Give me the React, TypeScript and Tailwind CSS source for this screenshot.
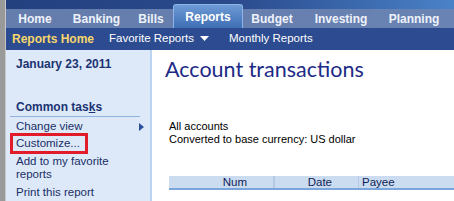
import React from 'react';

const tabs = [
  { label: 'Home', w: 'w-[58px]' },
  { label: 'Banking', w: 'w-[65px]' },
  { label: 'Bills', w: 'w-[44px]' },
  { label: 'Reports', w: 'w-[70px]', active: true },
  { label: 'Budget', w: 'w-[58px]' },
  { label: 'Investing', w: 'w-[80px]' },
  { label: 'Planning', w: 'w-[66px]' },
];

const App: React.FC = () => {
  return (
    <div className="w-[454px] h-[201px] overflow-hidden flex bg-white font-['Liberation_Sans',Arial,sans-serif]">
      {/* left window frame */}
      <div className="w-[6px] shrink-0 bg-[#9a9a9a] border-r border-[#c8c8c8]" />

      <div className="flex-1 flex flex-col min-w-0">
        {/* tab bar */}
        <div className="h-[28px] shrink-0 bg-gradient-to-r from-[#23407f] via-[#2a4a8c] to-[#4a82c8] flex flex-col justify-end">
          <div className="h-[19px] bg-[#6d84b1]/90 flex items-stretch">
            {tabs.map(t =>
              t.active ? (
                <div
                  key={t.label}
                  className={`${t.w} -mt-[5px] h-[24px] rounded-t-[3px] bg-gradient-to-b from-[#6e9ad6] to-[#3e6eb4] border-t border-x border-[#8fb4e6] flex items-center justify-center text-[12px] font-bold text-white`}
                >
                  {t.label}
                </div>
              ) : (
                <div
                  key={t.label}
                  className={`${t.w} flex items-center justify-center text-[12px] font-bold text-[#eef2fa]`}
                >
                  {t.label}
                </div>
              )
            )}
          </div>
        </div>

        {/* sub navigation */}
        <div className="h-[22px] shrink-0 bg-[#2c4b90] flex items-center text-[11.5px] text-white">
          <span className="ml-[6px] text-[12px] font-bold text-[#f6d66c]">Reports Home</span>
          <span className="ml-[15px] flex items-center gap-[6px]">
            Favorite Reports
            <svg width="9" height="6" viewBox="0 0 9 6"><path d="M0 0h9L4.5 5z" fill="#fff" /></svg>
          </span>
          <span className="ml-[20px]">Monthly Reports</span>
        </div>

        <div className="flex-1 flex min-h-0">
          {/* sidebar */}
          <div className="w-[146px] shrink-0 bg-[#dde9f9] border-r-2 border-[#b9d3f1] pl-[4px] pt-[6px] text-[#1b3372]">
            <div className="pl-[6px] text-[12px] leading-[16px] font-bold">January 23, 2011</div>
            <div className="mt-[27px] pl-[6px] mr-[10px] pb-[1px] border-b border-[#8fb2e0] text-[12px] leading-[16px] font-bold">
              Common tas<span className="underline">k</span>s
            </div>
            <div className="mt-[3px] flex flex-col text-[11.5px] leading-[13px] text-[#1a2f66]">
              <div className="pl-[6px] flex items-center justify-between pr-[6px] h-[13px]">
                <span>Change view</span>
                <svg width="5" height="8" viewBox="0 0 5 8"><path d="M0 0l5 4-5 4z" fill="#2a4f9a" /></svg>
              </div>
              <div className="w-[78px] h-[21px] border-[3px] border-[#e21b2a] pl-[3px] flex items-center">Customize...</div>
              <div className="mt-[1px] pl-[6px]">Add to my favorite<br />reports</div>
              <div className="mt-[5px] pl-[6px]">Print this report</div>
            </div>
          </div>

          {/* main report */}
          <div className="flex-1 min-w-0 pl-[13px] pt-[6px]">
            <h1 className="text-[21.5px] leading-[27px] text-[#1c2a86] font-['Lato',sans-serif]">Account transactions</h1>
            <div className="mt-[37px] pl-[4px] text-[11px] leading-[13px] text-black">
              <div>All accounts</div>
              <div>Converted to base currency: US dollar</div>
            </div>
            <div className="mt-[30px] ml-[4px] h-[14px] bg-[#cbdcf0] border-b-2 border-[#7ba6dc] flex text-[11.5px] leading-[12px] text-[#0f1f55]">
              <div className="w-[106px] border-r-2 border-[#b3c9e4] text-right pr-[26px]">Num</div>
              <div className="w-[84px] border-r border-[#b3c9e4] text-right pr-[26px]">Date</div>
              <div className="pl-[3px]">Payee</div>
            </div>
          </div>
        </div>
      </div>
    </div>
  );
};

export default App;
